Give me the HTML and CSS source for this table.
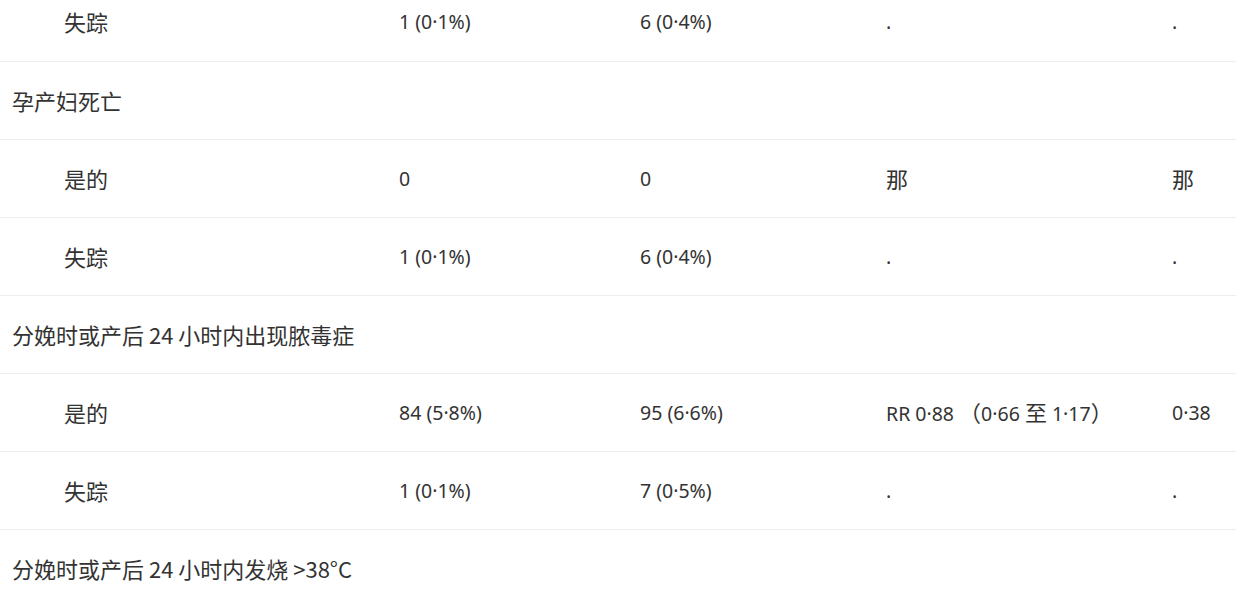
FILE: index.html
```html
<!DOCTYPE html>
<html lang="en">
<head>
<meta charset="utf-8">
<link rel="stylesheet" href="styles.css">
</head>
<body>
<table class="results">
  <colgroup>
    <col class="c1"><col class="c2"><col class="c3"><col class="c4"><col class="c5">
  </colgroup>
  <tbody>
    <tr class="sub"><td>失踪</td><td class="n">1 (0·1%)</td><td class="n">6 (0·4%)</td><td class="n">.</td><td class="n">.</td></tr>
    <tr class="head"><td colspan="5">孕产妇死亡</td></tr>
    <tr class="sub"><td>是的</td><td class="n">0</td><td class="n">0</td><td>那</td><td>那</td></tr>
    <tr class="sub"><td>失踪</td><td class="n">1 (0·1%)</td><td class="n">6 (0·4%)</td><td class="n">.</td><td class="n">.</td></tr>
    <tr class="head"><td colspan="5">分娩时或产后 24 小时内出现脓毒症</td></tr>
    <tr class="sub"><td>是的</td><td class="n">84 (5·8%)</td><td class="n">95 (6·6%)</td><td class="n">RR 0·88 <span class="h">（</span>0·66 <span class="h">至</span> 1·17<span class="h">）</span></td><td class="n">0·38</td></tr>
    <tr class="sub"><td>失踪</td><td class="n">1 (0·1%)</td><td class="n">7 (0·5%)</td><td class="n">.</td><td class="n">.</td></tr>
    <tr class="head"><td colspan="5">分娩时或产后 24 小时内发烧 &gt;38°C</td></tr>
  </tbody>
</table>
</body>
</html>
```

FILE: styles.css
```css
html, body {
  margin: 0;
  padding: 0;
  background: #ffffff;
}

body {
  font-family: "Noto Sans CJK SC", "Noto Sans", sans-serif;
  font-size: 22px;
  color: #333333;
  overflow: hidden;
}

.results {
  width: 1236px;
  table-layout: fixed;
  border-collapse: collapse;
  margin-top: -17px;
}

.c1 { width: 387px; }
.c2 { width: 241px; }
.c3 { width: 246px; }
.c4 { width: 286px; }
.c5 { width: 76px; }

.results td {
  height: 78px;
  padding: 0 0 0 12px;
  box-sizing: border-box;
  vertical-align: middle;
  white-space: nowrap;
  border-bottom: 1px solid #eeeeee;
  line-height: 33px;
}

.results tr.sub td:first-child {
  padding-left: 64px;
}

.results td.n {
  font-family: "Noto Sans", "Noto Sans CJK SC", sans-serif;
  font-size: 19.5px;
}

.results td.n .h {
  font-family: "Noto Sans CJK SC", sans-serif;
  font-size: 22px;
}
```
